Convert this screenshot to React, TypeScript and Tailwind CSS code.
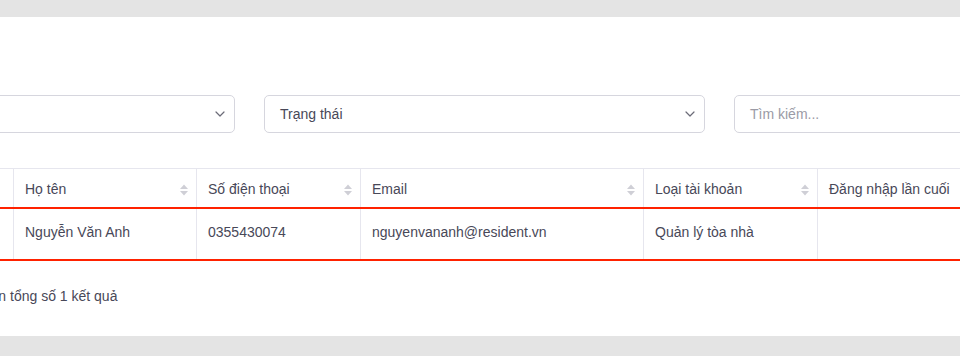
import React from "react";

const font = { fontFamily: '"Liberation Sans", Arial, sans-serif' };

function Chevron() {
  return (
    <svg width="10" height="6" viewBox="0 0 10 6" fill="none">
      <path d="M1 1l4 4 4-4" stroke="#6b6b78" strokeWidth="1.2" strokeLinecap="round" strokeLinejoin="round" />
    </svg>
  );
}

function SortIcon() {
  return (
    <svg width="10" height="12" viewBox="0 0 10 12" className="shrink-0">
      <path d="M5 0.5L9 5H1z" fill="#cfcfd6" />
      <path d="M5 11.5L9 7H1z" fill="#cfcfd6" />
    </svg>
  );
}

function HeadCell({ w, label, sort = true, first = false }: { w: string; label: string; sort?: boolean; first?: boolean }) {
  return (
    <div className={`${w} shrink-0 h-full flex items-center justify-between pl-[11px] pr-[7px] pt-[3px] ${first ? "" : "border-l border-[#e6e6ee]"}`}>
      <span className="whitespace-nowrap">{label}</span>
      {sort && <SortIcon />}
    </div>
  );
}

function Cell({ w, children, first = false }: { w: string; children?: React.ReactNode; first?: boolean }) {
  return (
    <div className={`${w} shrink-0 h-full flex items-center pl-[11px] pb-[3px] ${first ? "" : "border-l border-[#e6e6ee]"}`}>
      <span className="whitespace-nowrap">{children}</span>
    </div>
  );
}

export default function App() {
  return (
    <div className="w-[960px] h-[356px] overflow-hidden bg-[#e4e4e4] pt-[17px]" style={font}>
      <div className="h-[319px] w-full bg-white overflow-hidden text-[14px] text-[#484858]">
        {/* Filters */}
        <div className="flex gap-[29px] mt-[78px] ml-[-65px]">
          <div className="w-[300px] h-[38px] shrink-0 rounded-[5px] border border-[#d6d6de] flex items-center justify-end pr-[9px]">
            <Chevron />
          </div>
          <div className="w-[441px] h-[38px] shrink-0 rounded-[5px] border border-[#d6d6de] flex items-center justify-between pl-[15px] pr-[9px]">
            <span>Trạng thái</span>
            <Chevron />
          </div>
          <div className="w-[441px] h-[38px] shrink-0 rounded-[5px] border border-[#d6d6de] flex items-center pl-[15px] text-[#9b9ba6]">
            Tìm kiếm...
          </div>
        </div>

        {/* Table */}
        <div className="mt-[35px] ml-[-47px] w-[1300px]">
          <div className="flex h-[39px] border-t border-[#e6e6ee]">
            <HeadCell w="w-[60px]" label="" sort={false} first />
            <HeadCell w="w-[183px]" label="Họ tên" />
            <HeadCell w="w-[164px]" label="Số điện thoại" />
            <HeadCell w="w-[283px]" label="Email" />
            <HeadCell w="w-[174px]" label="Loại tài khoản" />
            <HeadCell w="w-[200px]" label="Đăng nhập lần cuối" />
          </div>
          <div className="flex h-[54px] border-y-2 border-[#ff2200]">
            <Cell w="w-[60px]" first />
            <Cell w="w-[183px]">Nguyễn Văn Anh</Cell>
            <Cell w="w-[164px]">0355430074</Cell>
            <Cell w="w-[283px]">nguyenvananh@resident.vn</Cell>
            <Cell w="w-[174px]">Quản lý tòa nhà</Cell>
            <Cell w="w-[200px]"></Cell>
          </div>
        </div>

        {/* Footer */}
        <div className="mt-[25px] ml-[-18px] leading-[20px] whitespace-nowrap">trên tổng số 1 kết quả</div>
      </div>
    </div>
  );
}
